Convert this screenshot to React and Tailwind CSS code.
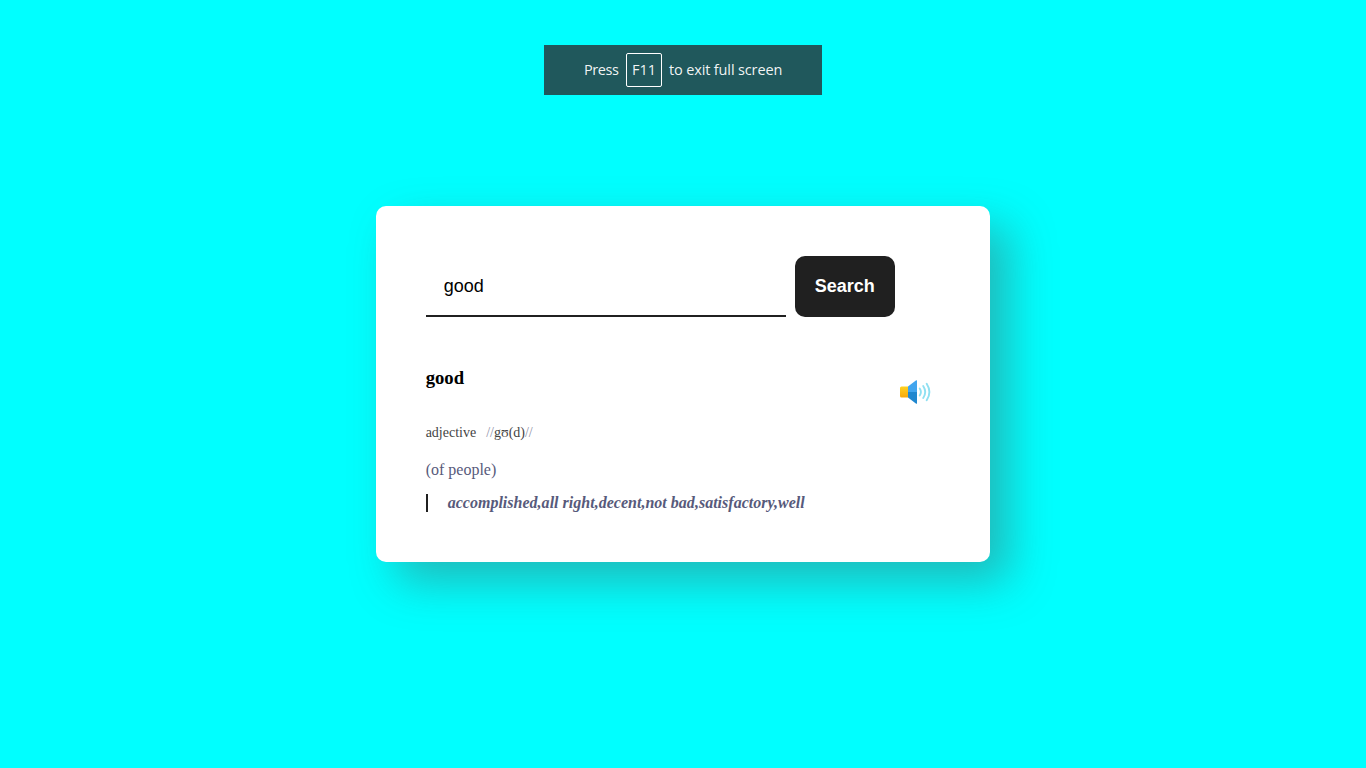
function SpeakerIcon() {
  return (
    <svg width="32" height="26" viewBox="0 0 32 26" aria-hidden="true">
      <defs>
        <linearGradient id="box" x1="0" y1="0" x2="0" y2="1">
          <stop offset="0" stopColor="#ffd21f" />
          <stop offset="1" stopColor="#f7a80c" />
        </linearGradient>
      </defs>
      <path d="M9 7.500H2.500Q1 7.500 1 9v8q0 1.500 1.500 1.500H9z" fill="url(#box)" />
      <path d="M17.200 1.300 9 7.500V13h9V2q0-1.200-.8-.7z" fill="#41a5ee" />
      <path d="M9 13v5.500l8.200 6.200q.8.500.8-.7V13z" fill="#1f87cf" />
      <g fill="none" stroke="#8fe0f2" strokeWidth="1.900" strokeLinecap="round">
        <path d="M20.700 9.500q2.400 3.500 0 7" />
        <path d="M24.200 7q4 6 0 12" />
        <path d="M27.700 4.700q5.400 8.300 0 16.600" />
      </g>
    </svg>
  );
}

function FullScreenNotice() {
  return (
    <div className="absolute left-[544px] top-[45px] flex h-[50px] w-[278px] items-center bg-[#20585c] pl-10 font-['Open_Sans','Noto_Sans',sans-serif] text-[14.5px] text-white/95">
      <span className="w-[42px] tracking-[-0.45px]">Press</span>
      <span className="flex h-[34px] w-9 items-center justify-center rounded-[2px] border border-white">F11</span>
      <span className="ml-[7px] whitespace-nowrap tracking-[-0.14px]">to exit full screen</span>
    </div>
  );
}

export default function App() {
  return (
    <div className="relative flex h-screen items-center justify-center overflow-hidden bg-[#00ffff] font-['Liberation_Serif',serif]">
      <FullScreenNotice />
      <main className="h-[356px] w-[45%] rounded-[10px] bg-white p-[50px] shadow-[20px_20px_45px_rgba(80,80,80,0.4)]">
        <div className="flex items-start gap-[9px]">
          <input
            defaultValue="good"
            className="h-[61px] w-[360px] border-b-2 border-[#202020] px-[18px] pt-[2px] font-['Liberation_Sans',sans-serif] text-[18px] text-black outline-none"
          />
          <button className="h-[61px] w-[100px] rounded-[10px] bg-[#202020] font-['Liberation_Sans',sans-serif] text-[18px] font-bold text-white">
            Search
          </button>
        </div>
        <div className="mt-[50px] flex justify-between pr-[9px]">
          <h3 className="text-[18.720px] font-bold leading-[22px] text-black">good</h3>
          <button className="mt-3 h-[26px] w-8">
            <SpeakerIcon />
          </button>
        </div>
        <div className="mt-5 flex gap-[10px] text-[14px] leading-4 text-[#444444]">
          <p>adjective</p>
          <p>
            <span className="text-[#8f91a8]">//</span>gʊ(d)<span className="text-[#8f91a8]">//</span>
          </p>
        </div>
        <p className="mt-5 text-[16px] leading-[18px] text-[#575a7b]">(of people)</p>
        <p className="mt-[15px] border-l-2 border-[#202020] pl-5 text-[16px] font-bold italic leading-[18px] tracking-[0.015px] text-[#575a7b]">
          accomplished,all right,decent,not bad,satisfactory,well
        </p>
      </main>
    </div>
  );
}
